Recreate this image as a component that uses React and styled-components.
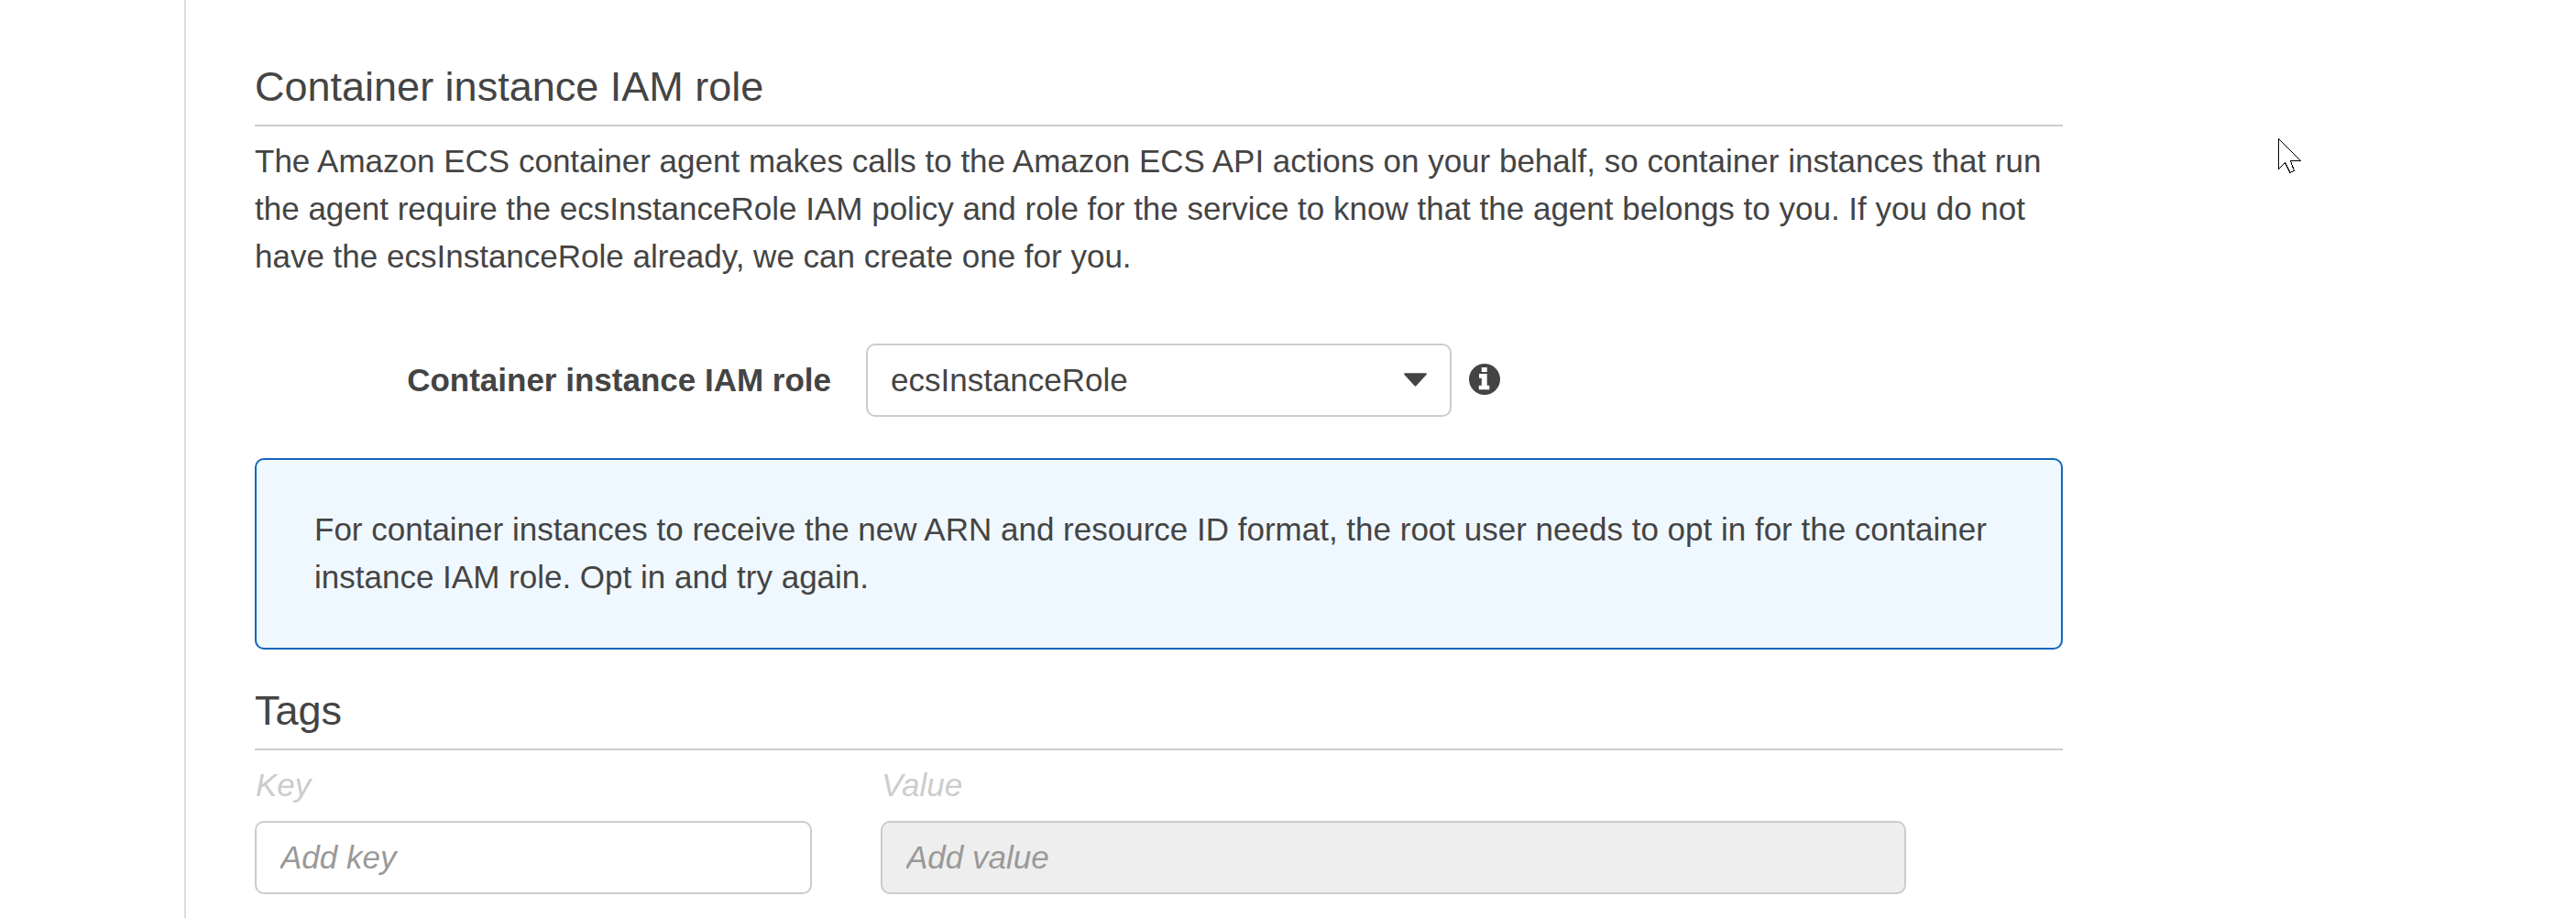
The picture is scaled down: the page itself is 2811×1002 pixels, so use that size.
import React from "react";
import styled, { createGlobalStyle } from "styled-components";

const GlobalStyle = createGlobalStyle`
  *, *::before, *::after { box-sizing: border-box; }
  html, body { margin: 0; padding: 0; background: #fff; overflow: hidden; }
  body { color: #444; font: 35px/52px "Liberation Sans", Arial, sans-serif; }
`;

const Page = styled.div`
  display: flex;
  width: 2811px;
  height: 1002px;
  padding-left: 201px;
  overflow: hidden;
`;

const Main = styled.main`
  flex: 1;
  padding: 62px 0 0 75px;
  border-left: 2px solid #ddd;
`;

const Column = styled.div`
  width: 1973px;
`;

const Heading = styled.h2`
  height: 76px;
  margin: 0;
  padding-top: 6px;
  border-bottom: 2px solid #ccc;
  font-size: 45px;
  font-weight: 400;
  line-height: 54px;
`;

const Paragraph = styled.p`
  height: 158px;
  margin: 12px 0 0;
`;

const FormRow = styled.div`
  display: flex;
  align-items: center;
  height: 80px;
  margin-top: 67px;
`;

const Label = styled.label`
  width: 629px;
  margin-right: 38px;
  font-weight: 700;
  text-align: right;
`;

const Select = styled.div`
  display: flex;
  align-items: center;
  justify-content: space-between;
  width: 639px;
  height: 80px;
  padding: 0 25px;
  border: 2px solid #ccc;
  border-radius: 10px;
`;

const Caret = styled.svg`
  display: block;
  width: 25px;
  height: 15px;
  margin-top: -1px;
`;

const InfoIcon = styled.svg`
  display: block;
  width: 34px;
  height: 34px;
  margin: -3px 0 0 19px;
`;

const Notice = styled.div`
  height: 209px;
  margin-top: 45px;
  padding: 50px 63px;
  border: 2px solid #1166bb;
  border-radius: 10px;
  background: #f0f8ff;
`;

const TagSection = styled.section`
  margin-top: 34px;
`;

const TagGrid = styled.div`
  display: grid;
  grid-template-columns: 608px 1119px;
  column-gap: 75px;
  margin-top: 12px;
`;

const Field = styled.div`
  display: flex;
  flex-direction: column;
`;

const FieldName = styled.span`
  height: 65px;
  padding-left: 1px;
  color: #ccc;
  font-style: italic;
`;

const Input = styled.input`
  width: 100%;
  height: 80px;
  padding: 0 26px;
  border: 2px solid #ccc;
  border-radius: 10px;
  background: #fff;
  font: inherit;
  outline: none;

  &::placeholder {
    color: #999;
    font-style: italic;
    opacity: 1;
  }

  &:disabled {
    background: #eee;
  }
`;

const Pointer = styled.svg`
  position: absolute;
  top: 150px;
  left: 2485px;
  width: 28px;
  height: 42px;
`;

export default function App() {
  return (
    <>
      <GlobalStyle />
      <Page>
        <Main>
          <Column>
            <Heading>Container instance IAM role</Heading>
            <Paragraph>
              The Amazon ECS container agent makes calls to the Amazon ECS API actions on your behalf, so container instances that run the agent require the ecsInstanceRole IAM policy and role for the service to know that the agent belongs to you. If you do not have the ecsInstanceRole already, we can create one for you.
            </Paragraph>
            <FormRow>
              <Label>Container instance IAM role</Label>
              <Select>
                <span>ecsInstanceRole</span>
                <Caret viewBox="0 0 25 15">
                  <path d="M1 .3H24Q25.5 .8 24.3 2.2L13.5 14Q12.5 15 11.5 14L.7 2.2Q-.5 .8 1 .3Z" fill="#444" />
                </Caret>
              </Select>
              <InfoIcon viewBox="0 0 34 34">
                <circle cx="17" cy="17" r="17" fill="#444" />
                <path d="M13.8 4h5.9v5h-5.9zM11 11h8.7v12.7h2.6v4.5H10.8v-4.5h3v-8H11z" fill="#fff" />
              </InfoIcon>
            </FormRow>
            <Notice>
              For container instances to receive the new ARN and resource ID format, the root user needs to opt in for the container instance IAM role. Opt in and try again.
            </Notice>
            <TagSection>
              <Heading>Tags</Heading>
              <TagGrid>
                <Field>
                  <FieldName>Key</FieldName>
                  <Input placeholder="Add key" />
                </Field>
                <Field>
                  <FieldName>Value</FieldName>
                  <Input placeholder="Add value" disabled />
                </Field>
              </TagGrid>
            </TagSection>
          </Column>
        </Main>
      </Page>
      <Pointer viewBox="0 0 28 42">
        <path d="M1.5 1.5V34.5L8.5 27.5L14 38.5L18.5 36.5L14.5 25.5H25.5Z" fill="#fff" stroke="#000" shapeRendering="crispEdges" />
      </Pointer>
    </>
  );
}
